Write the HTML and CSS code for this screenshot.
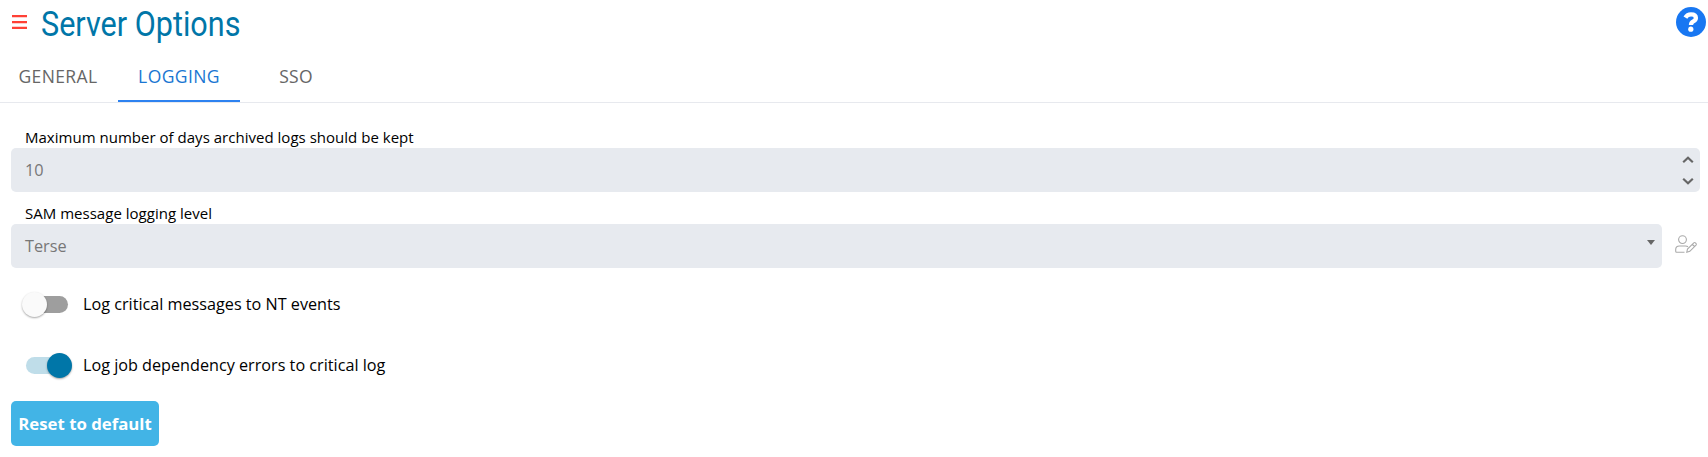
FILE: index.html
```html
<!DOCTYPE html>
<html lang="en">
<head>
<meta charset="utf-8">
<title>Server Options</title>
<link rel="stylesheet" href="styles.css">
</head>
<body>
<header class="header">
  <svg class="menu" viewBox="0 0 15 14"><path d="M0 1.1h15M0 7.1h15M0 12.9h15"/></svg>
  <h1 class="title">Server Options</h1>
  <svg class="help" viewBox="0 0 30 30"><circle cx="15" cy="15" r="15"/><path d="M9.4 10.6Q11.2 7.4 15 7.4Q19.9 7.4 19.9 10.9Q19.9 13 17.3 14.3Q15 15.5 15 18"/><circle class="dot" cx="14.8" cy="22.2" r="2.6"/></svg>
</header>
<nav class="tabs">
  <a class="tab general"><span>GENERAL</span></a>
  <a class="tab logging active"><span>LOGGING</span></a>
  <a class="tab sso"><span>SSO</span></a>
</nav>
<main class="content">
  <label class="label days">Maximum number of days archived logs should be kept</label>
  <div class="field">
    <span class="value">10</span>
    <div class="spin">
      <svg viewBox="0 0 12 8"><path d="M1.2 6.2L6 1.8l4.8 4.4"/></svg>
      <svg viewBox="0 0 12 8"><path d="M1.2 1.8L6 6.2l4.8-4.4"/></svg>
    </div>
  </div>
  <label class="label level">SAM message logging level</label>
  <div class="row">
    <div class="field select"><span class="value">Terse</span><i class="arrow"></i></div>
    <svg class="user-edit" viewBox="0 0 22 18"><circle cx="7.5" cy="4.6" r="3.9"/><path d="M9.5 17.2H1.6Q.7 17.2.7 16.2V14.5Q.7 11 4.4 11H10.5Q12 11 13 11.8M11.8 17.2l.7-3.2 6.3-6.1q.8-.7 1.6 0l.6.6q.7.8 0 1.6l-6.2 6.2zM17.4 9.3l2.2 2.2"/></svg>
  </div>
  <div class="toggle-row"><span class="switch"><i></i></span><span class="nt">Log critical messages to NT events</span></div>
  <div class="toggle-row second"><span class="switch on"><i></i></span><span class="job">Log job dependency errors to critical log</span></div>
  <button class="reset">Reset to default</button>
</main>
</body>
</html>
```
FILE: styles.css
```css
* { box-sizing: border-box; }
body { margin: 0; background: #fff; color: #111; font: 16px "Open Sans", "Noto Sans", sans-serif; }
svg { display: block; flex: none; fill: none; }
.header { display: flex; height: 48px; padding: 0 2px 0 12px; }
.menu { width: 15px; height: 14px; margin-top: 15px; stroke: #ff4136; stroke-width: 2.2; }
.title { margin: 0 0 0 14px; font: 400 34.5px/48px Roboto, sans-serif; color: #0076a8; white-space: nowrap; transform: scaleX(.886); transform-origin: left; }
.help { width: 30px; height: 30px; margin: 7px 0 0 auto; fill: #1877f2; }
.help path { fill: none; stroke: #fff; stroke-width: 4.3; }
.help .dot { fill: #fff; }
.tabs { display: flex; height: 55px; border-bottom: 1px solid #e7e9ee; }
.tab { display: flex; align-items: center; justify-content: center; height: 54px; padding-top: 1px; color: #666; font-size: 17.5px; letter-spacing: .4px; }
.general { width: 118px; padding-right: 2px; }
.logging { width: 122px; }
.sso { width: 112px; letter-spacing: .2px; }
.active { padding-top: 3px; color: #1976d2; border-bottom: 2px solid #2d82f0; }
.content { padding: 23px 8px 0 11px; }
.label { display: block; height: 22px; padding-left: 14px; font-size: 15px; line-height: 22px; letter-spacing: .02px; color: #000; }
.level { height: 32px; padding-top: 10px; }
.field { display: flex; align-items: center; justify-content: space-between; height: 44px; background: #e7eaef; border-radius: 5px; padding: 0 6px 0 14px; color: #777; }
.value { padding-bottom: 1px; font-size: 16.3px; }
.spin { display: flex; flex-direction: column; gap: 13px; }
.spin svg { width: 12px; height: 8px; stroke: #666; stroke-width: 2.2; }
.row { display: flex; align-items: center; }
.select { width: 1651px; }
.arrow { border: 4.5px solid transparent; border-width: 5px 4.5px 0; border-top-color: #666; margin: 0 1px 8px 0; }
.user-edit { width: 22px; height: 18px; margin: 0 0 5px 13px; stroke: #aaa; stroke-width: 1.1; }
.toggle-row { display: flex; align-items: center; height: 28px; margin-top: 22px; padding-left: 15px; color: #000; font-size: 16.2px; }
.second { margin-top: 33px; }
.switch { display: flex; align-items: center; width: 42px; height: 17px; margin-right: 15px; border-radius: 9px; background: #9e9e9e; }
.switch i { width: 25px; height: 25px; flex: none; margin-left: -4px; border-radius: 50%; background: #fafafa; box-shadow: 0 1px 2px rgba(0,0,0,.35); }
.on { background: #bfdde9; }
.on i { margin-left: 21px; background: #0076a8; }
.reset { display: block; width: 148px; height: 45px; margin-top: 22px; padding: 0; border: 0; border-radius: 5px; background: #42b4e6; color: #fff; font: 700 16.8px "Open Sans", sans-serif; white-space: nowrap; }
```
